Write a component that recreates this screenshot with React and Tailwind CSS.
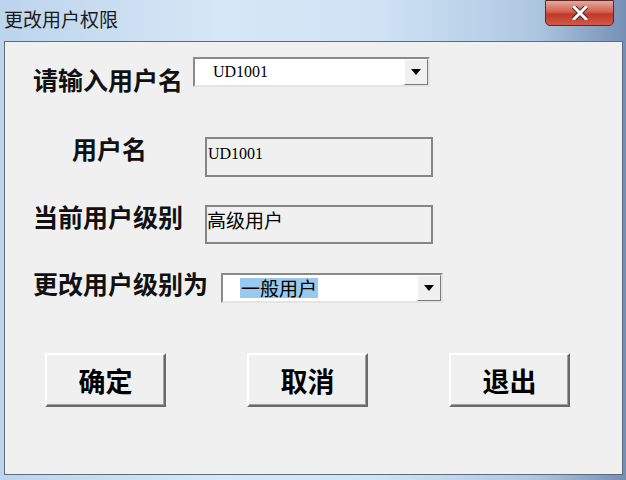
import React from "react";

const cjk = "font-['Noto_Sans_CJK_SC','Noto_Sans',sans-serif]";

function Combo({ width, children }) {
  return (
    <div
      className={`${width} h-[30px] flex border-2 border-t-[#8a8a8a] border-l-[#8a8a8a] border-b-[#e4e4e4] border-r-[#e4e4e4] bg-white`}
    >
      <div className="flex-1 flex items-center overflow-hidden">{children}</div>
      {/* Dropdown arrow */}
      <div className="w-[24px] h-full flex items-center justify-center bg-[#f0f0f0] border border-t-white border-l-white border-b-[#7a7a7a] border-r-[#7a7a7a]">
        <svg width="10" height="6" viewBox="0 0 10 6">
          <path d="M0 0 H10 L5 6 Z" fill="#000" />
        </svg>
      </div>
    </div>
  );
}

function Button({ label }) {
  return (
    <button
      className={`w-[121px] h-[54px] bg-[#f0f0f0] border-2 border-t-white border-l-white border-b-[#6b6b6b] border-r-[#6b6b6b] shadow-[inset_-1px_-1px_0_#a0a0a0] flex items-center justify-center ${cjk} font-bold text-[27px] leading-none text-black`}
    >
      {label}
    </button>
  );
}

export default function App() {
  return (
    <div className="w-[626px] h-[480px] flex flex-col bg-[linear-gradient(90deg,#bcd4ec_0%,#d6e7f6_35%,#d0e3f5_60%,#afc8e2_85%,#7590b5_100%)] overflow-hidden">
      {/* Title bar */}
      <div className="h-[41px] flex items-start justify-between">
        <span className={`${cjk} text-[19px] leading-none text-[#1b1b1b] mt-[9px] ml-[4px]`}>
          更改用户权限
        </span>
        <div className="w-[69px] h-[26px] mr-[12px] rounded-b-[5px] border border-[#5b2a27] bg-[linear-gradient(180deg,#e8a89c_0%,#d2614f_45%,#c0392b_55%,#cf5a45_100%)] flex items-center justify-center">
          <svg width="16" height="14" viewBox="0 0 16 14">
            <path d="M2 1 L14 13 M14 1 L2 13" stroke="#4a2a28" strokeWidth="5" strokeLinecap="square" />
            <path d="M2 1 L14 13 M14 1 L2 13" stroke="#fff" strokeWidth="3" strokeLinecap="square" />
          </svg>
        </div>
      </div>

      {/* Client area */}
      <div className="flex-1 ml-[4px] mr-[3px] mb-[5px] border border-[#5f6b7a] bg-[#f0f0f0] flex flex-col">
        {/* Row 1 */}
        <div className="flex items-start h-[30px] mt-[15px]">
          <span className={`ml-[28px] w-[160px] mt-[10px] ${cjk} font-bold text-[25px] leading-none text-[#111]`}>
            请输入用户名
          </span>
          <Combo width="w-[237px]">
            <span className="ml-[18px] font-['Liberation_Serif',serif] text-[16px] text-black">
              UD1001
            </span>
          </Combo>
        </div>

        {/* Row 2 */}
        <div className="flex items-start h-[40px] mt-[50px]">
          <span className={`ml-[67px] w-[133px] -mt-[1px] ${cjk} font-bold text-[25px] leading-none text-[#111]`}>
            用户名
          </span>
          <div className="w-[228px] h-[40px] border-2 border-[#868686] pl-[1px] pt-[2px]">
            <span className="font-['Liberation_Serif',serif] text-[16px] leading-none text-black">
              UD1001
            </span>
          </div>
        </div>

        {/* Row 3 */}
        <div className="flex items-start h-[39px] mt-[28px]">
          <span className={`ml-[28px] w-[172px] -mt-[1px] ${cjk} font-bold text-[25px] leading-none text-[#111]`}>
            当前用户级别
          </span>
          <div className="w-[228px] h-[39px] border-2 border-[#868686] pl-[0px] pt-[3px]">
            <span className={`${cjk} text-[19px] leading-none text-black`}>高级用户</span>
          </div>
        </div>

        {/* Row 4 */}
        <div className="flex items-start h-[30px] mt-[29px]">
          <span className={`ml-[28px] w-[188px] -mt-[2px] ${cjk} font-bold text-[25px] leading-none text-[#111]`}>
            更改用户级别为
          </span>
          <Combo width="w-[222px]">
            <span className={`ml-[17px] bg-[#99c9ef] px-[1px] ${cjk} text-[19px] leading-[20px] text-black`}>
              一般用户
            </span>
          </Combo>
        </div>

        {/* Buttons */}
        <div className="flex items-start mt-[50px] ml-[40px] gap-[81px]">
          <Button label="确定" />
          <Button label="取消" />
          <Button label="退出" />
        </div>
      </div>
    </div>
  );
}
